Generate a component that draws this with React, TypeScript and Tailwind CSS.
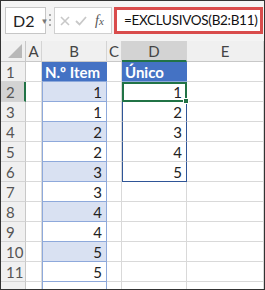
const cols = ["A", "B", "C", "D", "E"];
const items = [1, 1, 2, 2, 3, 3, 4, 4, 5, 5];
const uniques = [1, 2, 3, 4, 5];

const font = { fontFamily: 'Lato, "Liberation Sans", sans-serif' };

function Cell({ children, className = "" }: { children?: React.ReactNode; className?: string }) {
  return (
    <div className={`h-[20px] border-r border-b border-[#d9d9d9] text-[15px] leading-[19px] ${className}`}>{children}</div>
  );
}

export default function App() {
  const rows = Array.from({ length: 12 }, (_, i) => i + 1);
  return (
    <div className="w-[265px] h-[290px] overflow-hidden bg-white border border-[#333] text-[#222]" style={font}>
      {/* formula bar */}
      <div className="h-[40px] bg-[#f4f4f4] flex items-start pt-[6px] pl-[4px] gap-[2px]">
        <div className="w-[41px] h-[27px] bg-white border border-[#c6c6c6] flex items-center pl-[7px] gap-[6px] text-[16px]">
          <span>D2</span>
          <span className="text-[8px] text-[#777]">▼</span>
        </div>
        <div className="flex flex-col gap-[3px] pt-[7px] w-[4px] items-center">
          <span className="w-[2px] h-[2px] bg-[#aaa]" />
          <span className="w-[2px] h-[2px] bg-[#aaa]" />
          <span className="w-[2px] h-[2px] bg-[#aaa]" />
        </div>
        <div className="w-[58px] h-[27px] bg-white border border-[#d0d0d0] flex items-center pl-[5px] gap-[5px]">
          <svg width="10" height="10" viewBox="0 0 10 10">
            <path d="M1 1 L9 9 M9 1 L1 9" stroke="#c8c8c8" strokeWidth="1.6" />
          </svg>
          <svg width="12" height="10" viewBox="0 0 12 10">
            <path d="M1 5 L4.5 8.5 L11 1" stroke="#c8c8c8" strokeWidth="1.8" fill="none" />
          </svg>
          <span className="ml-[3px] text-[14px] italic text-[#555]" style={{ fontFamily: '"Liberation Serif", serif' }}>
            f<span className="text-[11px]">x</span>
          </span>
        </div>
        <div className="w-[149px] h-[27px] bg-white border-[3px] border-[#d94c4c] flex items-center pl-[7px] text-[13.5px] tracking-[-0.3px] text-[#111] whitespace-nowrap">
          =EXCLUSIVOS(B2:B11)
        </div>
      </div>

      {/* grid */}
      <div className="grid grid-cols-[25px_16px_65px_15px_65px_1fr] grid-rows-[21px] auto-rows-[20px]">
        <div className="bg-[#f0f0f0] border-r border-b border-[#c8c8c8] relative">
          <svg className="absolute right-[3px] bottom-[3px]" width="14" height="14" viewBox="0 0 14 14">
            <path d="M14 0 L14 14 L0 14 Z" fill="#b8b8b8" />
          </svg>
        </div>
        {cols.map((c) => (
          <div
            key={c}
            className={`text-center text-[15px] leading-[20px] text-[#444] border-r border-[#d4d4d4] ${
              c === "D" ? "bg-[#d3d3d3] border-b-2 border-b-[#217346]" : "bg-[#f0f0f0] border-b border-b-[#c8c8c8]"
            }`}
          >
            {c}
          </div>
        ))}

        {rows.map((r) => {
          const isHeader = r === 1;
          const bVal = r >= 2 && r <= 11 ? items[r - 2] : null;
          const band = r >= 2 && r <= 11 && r % 2 === 0;
          const dVal = r >= 2 && r <= 6 ? uniques[r - 2] : null;
          return (
            <div key={r} className="contents">
              <div
                className={`h-[20px] pl-[5px] text-[15px] leading-[20px] text-[#555] border-b border-[#d4d4d4] ${
                  r === 2 ? "bg-[#d3d3d3] border-r-2 border-r-[#217346]" : "bg-[#f0f0f0] border-r border-r-[#c8c8c8]"
                }`}
              >
                {r <= 11 ? r : ""}
              </div>
              <Cell />
              {isHeader ? (
                <div className="h-[20px] bg-[#4472c4] text-white font-bold text-[15px] leading-[20px] pl-[3px] border-b border-[#8ea9db]">
                  N.º Item
                </div>
              ) : bVal !== null ? (
                <div
                  className={`h-[20px] text-right pr-[4px] text-[15px] leading-[20px] border-x border-b border-[#8ea9db] ${
                    band ? "bg-[#d9e1f2]" : "bg-white"
                  }`}
                >
                  {bVal}
                </div>
              ) : (
                <div className="h-[20px] border-x border-[#8ea9db] border-b border-b-[#d9d9d9]" />
              )}
              <Cell />
              {isHeader ? (
                <div className="h-[20px] bg-[#4472c4] text-white font-bold text-[15px] leading-[20px] pl-[3px] border-b border-[#8ea9db]">
                  Único
                </div>
              ) : r === 2 ? (
                <div className="h-[20px] relative border-2 border-[#217346] text-right pr-[3px] text-[15px] leading-[16px] bg-white">
                  {dVal}
                  <span className="absolute -right-[4px] -bottom-[4px] w-[6px] h-[6px] bg-[#217346] border border-white" />
                </div>
              ) : dVal !== null ? (
                <div
                  className={`h-[20px] text-right pr-[4px] text-[15px] leading-[20px] border-x border-[#2f5597] ${
                    r === 6 ? "border-b border-b-[#2f5597]" : "border-b border-b-[#d9d9d9]"
                  }`}
                >
                  {dVal}
                </div>
              ) : (
                <Cell />
              )}
              <Cell />
            </div>
          );
        })}
      </div>
    </div>
  );
}
